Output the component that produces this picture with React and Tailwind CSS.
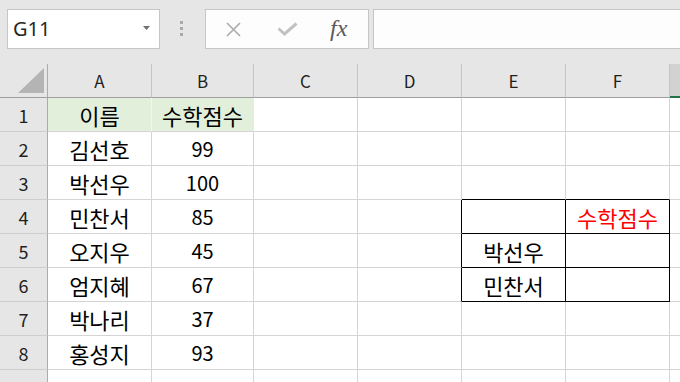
import React from 'react'

const cols = ['A', 'B', 'C', 'D', 'E', 'F']

// A, B, E, F values per row
const rows = [
  { n: 1, a: '이름', b: '수학점수', green: true },
  { n: 2, a: '김선호', b: '99' },
  { n: 3, a: '박선우', b: '100' },
  { n: 4, a: '민찬서', b: '85', f: '수학점수' },
  { n: 5, a: '오지우', b: '45', e: '박선우' },
  { n: 6, a: '엄지혜', b: '67', e: '민찬서' },
  { n: 7, a: '박나리', b: '37' },
  { n: 8, a: '홍성지', b: '93' },
  { n: 9 },
]

const widths = ['w-[104px]', 'w-[102px]', 'w-[104px]', 'w-[104px]', 'w-[104px]', 'w-[104px]']

function Cell({ w, children, className = '', num }) {
  return (
    <div className={`${w} shrink-0 h-[34px] border-r border-b border-[#d4d4d4] flex items-center justify-center leading-none ${num ? 'text-[20px]' : 'text-[22px]'} ${className}`}>
      {children}
    </div>
  )
}

function Toolbar() {
  return (
    <div className="h-[64px] bg-[#e6e6e6] flex items-start pt-[9px]">
      {/* name box */}
      <div className="ml-[7px] w-[153px] h-[40px] shrink-0 bg-white border border-[#c6c6c6] flex items-center justify-between pl-[5px] pr-[9px]">
        <span className="font-['Noto_Sans',sans-serif] text-[20px] text-[#262626] leading-none">G11</span>
        <svg width="7" height="4" viewBox="0 0 7 4" className="mb-[3px]"><path d="M0 0h7L3.5 4z" fill="#707070" /></svg>
      </div>
      <div className="ml-[20px] mt-[12px] flex flex-col gap-[3px] shrink-0">
        <div className="w-[3px] h-[3px] bg-[#a9a9a9]" />
        <div className="w-[3px] h-[3px] bg-[#a9a9a9]" />
        <div className="w-[3px] h-[3px] bg-[#a9a9a9]" />
      </div>
      {/* cancel / enter / fx */}
      <div className="ml-[22px] w-[164px] h-[40px] shrink-0 bg-[#fdfdfd] border border-[#c6c6c6] flex items-center">
        <svg width="15" height="15" viewBox="0 0 15 15" className="ml-[20px]">
          <path d="M1 1L14 14M14 1L1 14" stroke="#ababab" strokeWidth="1.6" />
        </svg>
        <svg width="21" height="14" viewBox="0 0 21 14" className="ml-[36px]">
          <path d="M1.5 6.5L7.5 12L19.5 1.5" stroke="#c2c2c2" strokeWidth="3" fill="none" />
        </svg>
        <span className="ml-[32px] font-['Liberation_Serif',serif] italic text-[24px] text-[#595959] leading-none mb-[2px]">fx</span>
      </div>
      <div className="ml-[4px] w-[330px] h-[40px] shrink-0 bg-[#fdfdfd] border border-[#c6c6c6]" />
    </div>
  )
}

export default function App() {
  return (
    <div className="w-[680px] h-[382px] overflow-hidden bg-white font-['Noto_Sans_CJK_KR',sans-serif] text-black">
      <Toolbar />

      {/* column headers */}
      <div className="flex h-[34px] bg-[#e6e6e6]">
        <div className="w-[48px] shrink-0 h-[34px] border-r border-b border-r-[#ababab] border-b-[#9e9e9e] flex items-start justify-end pt-[4px] pr-[3px]">
          <svg width="26" height="25" viewBox="0 0 26 25"><path d="M26 0V25H0z" fill="#b4b4b4" /></svg>
        </div>
        {cols.map((c, i) => (
          <div key={c} className={`${widths[i]} shrink-0 h-[34px] border-b border-b-[#9e9e9e] border-r border-r-[#c4c4c4] flex items-center justify-center text-[17px] text-[#1f1f1f] leading-none`}>
            {c}
          </div>
        ))}
        <div className="flex-1 h-[34px] bg-[#d2d2d2] border-b-2 border-[#217346]" />
      </div>

      {rows.map(r => {
        const boxRow = r.n >= 4 && r.n <= 6
        const efBottom = r.n >= 3 && r.n <= 6
        return (
          <div key={r.n} className="flex h-[34px]">
            <div className="w-[48px] shrink-0 h-[34px] bg-[#e6e6e6] border-r border-r-[#ababab] border-b border-b-[#cdcdcd] flex items-center justify-center text-[18px] text-[#1f1f1f] leading-none">
              {r.n}
            </div>
            <Cell w="w-[104px]" className={r.green ? 'bg-[#e2efda] border-r-[#f1f6ee]' : ''}>{r.a}</Cell>
            <Cell w="w-[102px]" num={!r.green} className={r.green ? 'bg-[#e2efda] border-r-[#e2efda]' : ''}>{r.b}</Cell>
            <Cell w="w-[104px]" />
            <Cell w="w-[104px]" className={boxRow ? 'border-r-black' : ''} />
            <Cell w="w-[104px]" className={`${boxRow ? 'border-r-black' : ''} ${efBottom ? 'border-b-black' : ''}`}>{r.e}</Cell>
            <Cell w="w-[104px]" className={`${boxRow ? 'border-r-black' : ''} ${efBottom ? 'border-b-black' : ''} text-[#ff0000]`}>{r.f}</Cell>
            <div className="flex-1 h-[34px] border-b border-[#d4d4d4]" />
          </div>
        )
      })}
    </div>
  )
}
